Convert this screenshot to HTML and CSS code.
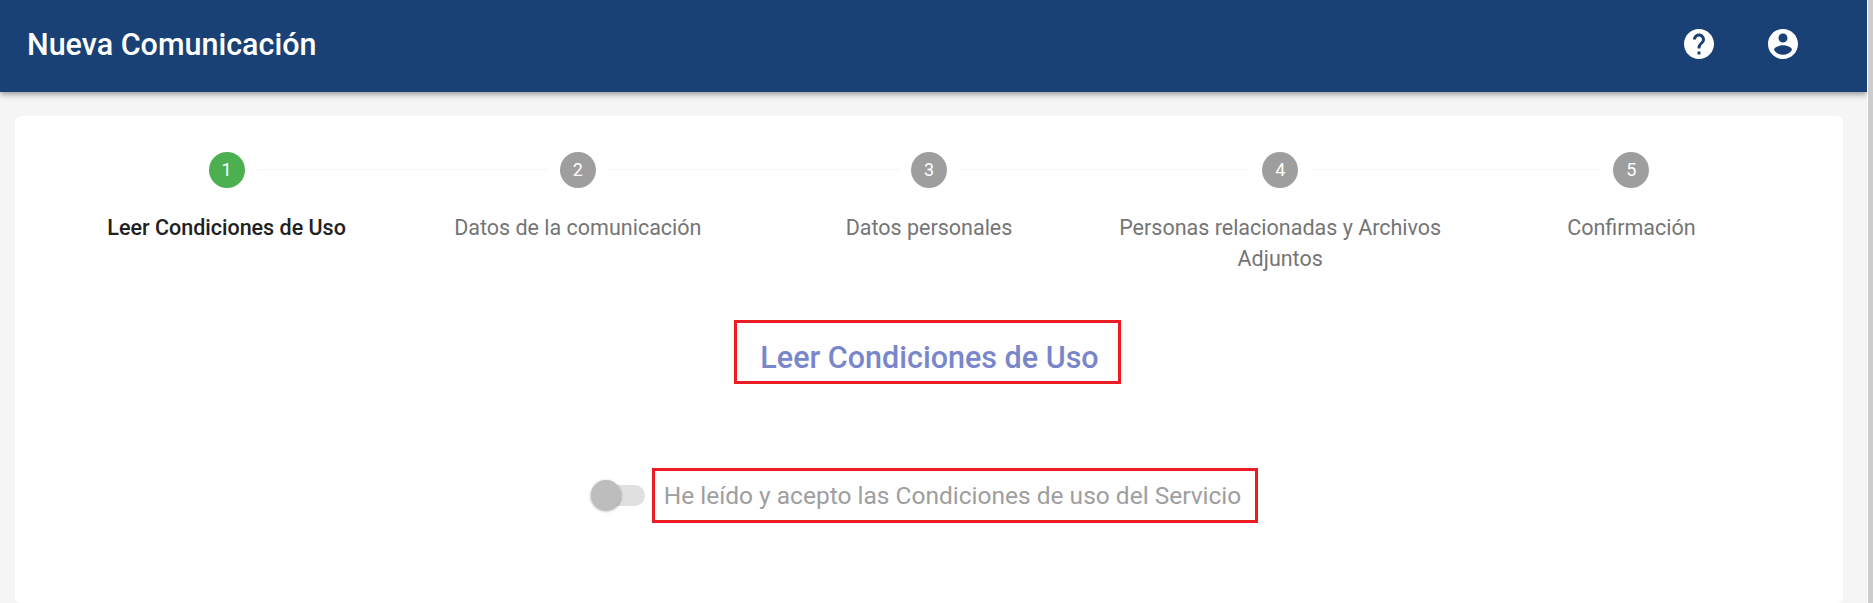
FILE: index.html
```html
<!DOCTYPE html>
<html lang="es">
<head>
  <title>Nueva Comunicación</title>
  <meta charset="UTF-8" />
  <meta name="viewport" content="width=device-width, initial-scale=1.0" />
  <link rel="stylesheet" href="styles.css">
</head>
<body>
  <div class="page">
    <header class="top-bar">
      <h1 class="top-title">Nueva Comunicación</h1>
      <div class="top-icons">
        <svg class="top-icon" viewBox="0 0 24 24"><path d="M12 2C6.48 2 2 6.48 2 12s4.48 10 10 10 10-4.48 10-10S17.52 2 12 2zm1 17h-2v-2h2v2zm2.07-7.75l-.9.92C13.45 12.9 13 13.5 13 15h-2v-.5c0-1.1.45-2.1 1.17-2.83l1.24-1.26c.37-.36.59-.86.59-1.41 0-1.1-.9-2-2-2s-2 .9-2 2H8c0-2.21 1.79-4 4-4s4 1.79 4 4c0 .88-.36 1.68-.93 2.25z"/></svg>
        <svg class="top-icon" viewBox="0 0 24 24"><path d="M12 2C6.48 2 2 6.48 2 12s4.48 10 10 10 10-4.48 10-10S17.52 2 12 2zm0 3c1.66 0 3 1.34 3 3s-1.34 3-3 3-3-1.34-3-3 1.34-3 3-3zm0 14.2c-2.5 0-4.71-1.28-6-3.22.03-1.99 4-3.08 6-3.08 1.99 0 5.97 1.09 6 3.08-1.29 1.94-3.5 3.22-6 3.22z"/></svg>
      </div>
    </header>

    <main class="card">
      <ol class="stepper">
        <li class="step step-active">
          <span class="step-num">1</span>
          <span class="step-label">Leer Condiciones de Uso</span>
        </li>
        <li class="step">
          <span class="step-num">2</span>
          <span class="step-label">Datos de la comunicación</span>
        </li>
        <li class="step">
          <span class="step-num">3</span>
          <span class="step-label">Datos personales</span>
        </li>
        <li class="step">
          <span class="step-num">4</span>
          <span class="step-label">Personas relacionadas y Archivos Adjuntos</span>
        </li>
        <li class="step">
          <span class="step-num">5</span>
          <span class="step-label">Confirmación</span>
        </li>
      </ol>

      <div class="title-row">
        <h2 class="section-title">Leer Condiciones de Uso</h2>
      </div>

      <div class="accept-row">
        <span class="switch"><span class="switch-knob"></span></span>
        <span class="accept-text">He leído y acepto las Condiciones de uso del Servicio</span>
      </div>
    </main>
  </div>
  <div class="scroll-lane"></div>
</body>
</html>
```

FILE: styles.css
```css
html,
body {
  height: 100%;
}

body {
  margin: 0;
  display: flex;
  overflow: hidden;
  background-color: #f5f5f5;
  font-family: Roboto, "Liberation Sans", sans-serif;
}

.page {
  flex: 1;
  min-width: 0;
}

.scroll-lane {
  width: 5px;
  border-left: 1px solid #fff;
  background-color: #cdcdcd;
}

.top-bar {
  height: 88px;
  display: flex;
  align-items: center;
  justify-content: space-between;
  padding: 0 66px 4px 27px;
  background-color: #1a4175;
  box-shadow: 0 2px 4px -1px rgba(0, 0, 0, 0.2), 0 4px 5px rgba(0, 0, 0, 0.14), 0 1px 10px rgba(0, 0, 0, 0.12);
}

.top-title {
  margin: 0;
  color: #fff;
  font-size: 30.5px;
  font-weight: 500;
}

.top-icons {
  display: flex;
  gap: 48px;
}

.top-icon {
  display: block;
  width: 36px;
  height: 36px;
  fill: #fff;
}

.card {
  height: 487px;
  margin: 24px 24px 0 15px;
  border-radius: 6px;
  background-color: #fff;
}

.stepper {
  display: grid;
  grid-template-columns: repeat(5, 1fr);
  margin: 0;
  padding: 36px 36px 0;
  list-style: none;
}

.step {
  position: relative;
  display: flex;
  flex-direction: column;
  align-items: center;
  padding: 0 8px;
  text-align: center;
}

/* line between two steps */
.step + .step::before {
  content: "";
  position: absolute;
  top: 17px;
  right: calc(50% + 30px);
  left: calc(-50% + 30px);
  border-top: 1px solid #f5f5f5;
}

.step-num {
  width: 36px;
  height: 36px;
  border-radius: 50%;
  background-color: #9e9e9e;
  color: #fff;
  font-size: 18px;
  line-height: 36px;
}

.step-active .step-num {
  background-color: #4caf50;
}

.step-label {
  margin-top: 24px;
  color: #757575;
  font-size: 21.5px;
  line-height: 31px;
}

.step-active .step-label {
  color: #212121;
  font-weight: 500;
}

.title-row {
  display: flex;
  justify-content: center;
  margin-top: 46px;
}

.section-title {
  margin: 0 3px 0 0;
  padding: 11px 19px 0 23px;
  border: 3px solid #ed1c24;
  color: #7986cb;
  font-size: 30.5px;
  font-weight: 500;
  line-height: 47px;
}

.accept-row {
  display: flex;
  justify-content: center;
  align-items: center;
  margin-top: 84px;
  padding-left: 1px;
}

.switch {
  position: relative;
  width: 44px;
  height: 21px;
  margin-right: 7px;
  border-radius: 11px;
  background-color: #e0e0e0;
}

.switch-knob {
  position: absolute;
  top: -5px;
  left: -10px;
  width: 30px;
  height: 30px;
  border-radius: 50%;
  background-color: #bdbdbd;
  box-shadow: 0 1px 3px rgba(0, 0, 0, 0.4);
}

.accept-text {
  padding: 0 14px 0 9px;
  border: 3px solid #ed1c24;
  color: #9e9e9e;
  font-size: 24.5px;
  line-height: 49px;
}
```
